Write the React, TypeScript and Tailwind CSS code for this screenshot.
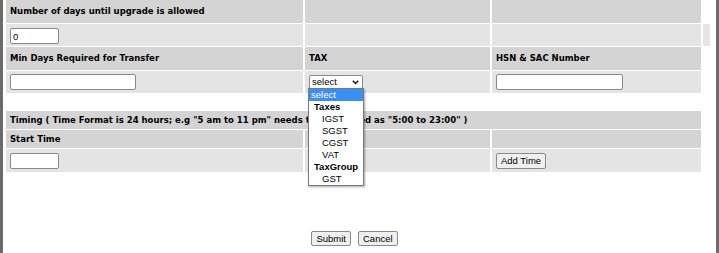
import React from 'react';

const head = 'flex items-center bg-[#d4d4d4] px-[4px] text-[8.5px] font-bold text-black';
const cell = 'flex items-center bg-[#e4e4e4] px-[4px]';
const input = 'h-[16px] rounded-[2px] border border-[#8a8a8a] bg-white px-[2px] text-[9.5px] leading-none';
const btn = 'flex h-[15px] items-center rounded-[2px] border border-[#8a8a8a] bg-[#efefef] px-[4px] text-[9.5px] leading-none text-black';

const TaxMenu = () => (
    <div className="absolute left-[-1px] top-[13px] z-10 w-[56px] border border-[#7a7a7a] bg-white shadow-[1px_1px_2px_rgba(0,0,0,0.35)] text-[9.5px] leading-[12px] text-black font-['Liberation_Sans',Arial,sans-serif]">
        <div className="h-[12px] bg-[#3a8ff5] pl-[2px] text-white">select</div>
        <div className="h-[12px] pl-[5px] font-bold">Taxes</div>
        <div className="h-[12px] pl-[13px]">IGST</div>
        <div className="h-[12px] pl-[13px]">SGST</div>
        <div className="h-[12px] pl-[13px]">CGST</div>
        <div className="h-[12px] pl-[13px]">VAT</div>
        <div className="h-[12px] pl-[5px] font-bold">TaxGroup</div>
        <div className="h-[12px] pl-[13px]">GST</div>
    </div>
);

export default function App() {
    return (
        <div className="flex h-[253px] w-[719px] overflow-hidden bg-white font-['DejaVu_Sans',Verdana,sans-serif]">
            <div className="w-[3px] shrink-0 bg-[#6b6b6b]" />
            <div className="flex flex-1 flex-col pl-[3px]">
                <div className="grid grid-cols-[297px_185px_209px_7px] grid-rows-[23px_22px_23px_22px] gap-x-[2px] gap-y-[1px]">
                    <div className={head}>Number of days until upgrade is allowed</div>
                    <div className={head} />
                    <div className={head} />
                    <div />

                    <div className={cell}>
                        <input className={`${input} mt-[2px] w-[49px] font-['Liberation_Sans',Arial,sans-serif]`} defaultValue="0" />
                    </div>
                    <div className={cell} />
                    <div className={cell} />
                    <div className="bg-[#e4e4e4]" />

                    <div className={head}>Min Days Required for Transfer</div>
                    <div className={`${head} px-[3px]`}>TAX</div>
                    <div className={`${head} px-[3px]`}>HSN &amp; SAC Number</div>
                    <div />

                    <div className={cell}>
                        <input className={`${input} h-[15px] w-[126px]`} />
                    </div>
                    <div className={`${cell} relative px-[3px]`}>
                        <div className="relative">
                            <div className="flex h-[14px] w-[54px] items-center justify-between rounded-[2px] border border-[#8a8a8a] bg-white pl-[2px] pr-[3px] text-[9.5px] leading-none text-black font-['Liberation_Sans',Arial,sans-serif]">
                                <span>select</span>
                                <svg width="7" height="5" viewBox="0 0 7 5">
                                    <path d="M0.8 0.8 L3.5 3.6 L6.2 0.8" fill="none" stroke="#111" strokeWidth="1.4" />
                                </svg>
                            </div>
                            <TaxMenu />
                        </div>
                    </div>
                    <div className={`${cell} px-[3px]`}>
                        <input className={`${input} h-[15px] w-[127px]`} />
                    </div>
                    <div />
                </div>

                <div className="mt-[18px] grid w-[695px] grid-cols-[297px_185px_209px] grid-rows-[18px_18px_23px] gap-x-[2px] gap-y-[1px]">
                    <div className={`${head} col-span-3`}>
                        Timing ( Time Format is 24 hours; e.g "5 am to 11 pm" needs to be entered as "5:00 to 23:00" )
                    </div>
                    <div className={head}>Start Time</div>
                    <div className={head} />
                    <div className={head} />

                    <div className={cell}>
                        <input className={`${input} w-[49px]`} />
                    </div>
                    <div className={cell} />
                    <div className={`${cell} px-[3px]`}>
                        <button className={`${btn} h-[16px] font-['Liberation_Sans',Arial,sans-serif]`}>Add Time</button>
                    </div>
                </div>

                <div className="mt-[59px] flex w-[695px] justify-center gap-[7px] pl-[2px] font-['Liberation_Sans',Arial,sans-serif]">
                    <button className={btn}>Submit</button>
                    <button className={btn}>Cancel</button>
                </div>
            </div>
            <div className="w-[3px] shrink-0 bg-[#6b6b6b]" />
        </div>
    );
}
